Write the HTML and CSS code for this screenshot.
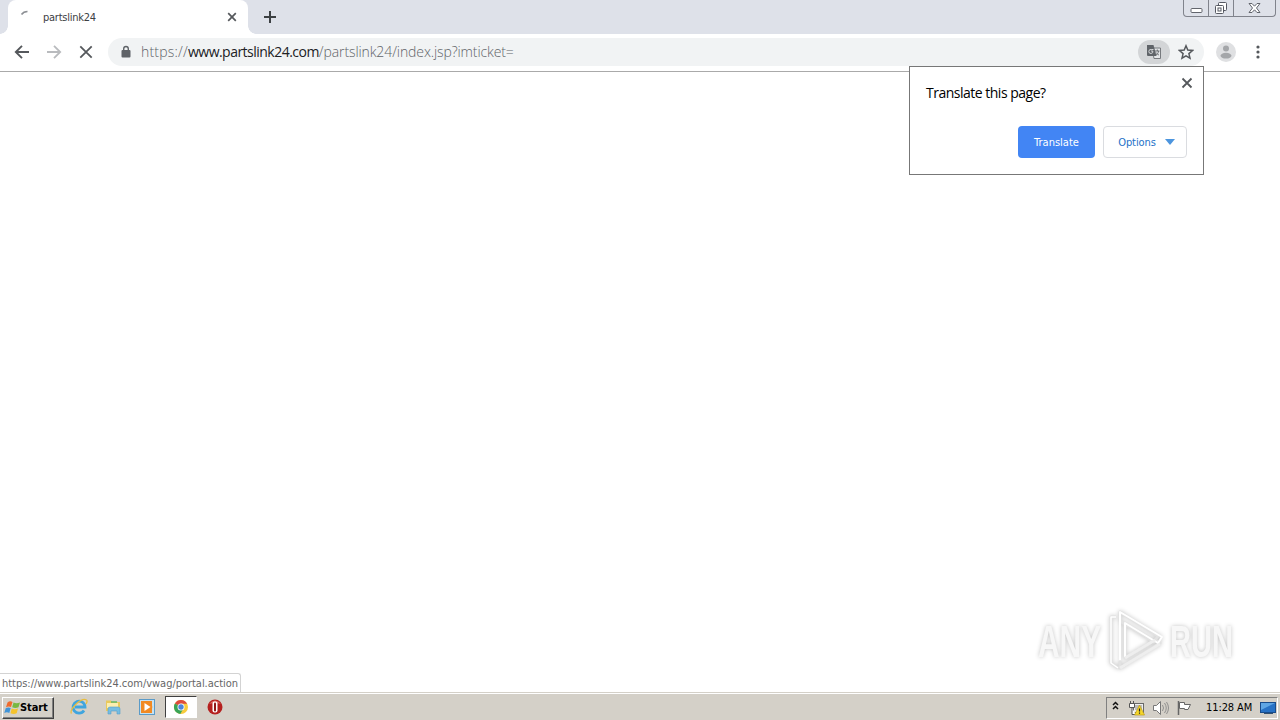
FILE: index.html
```html
<!DOCTYPE html>
<html lang="en">
<head>
  <meta charset="UTF-8" />
  <title>partslink24</title>
  <link rel="stylesheet" href="styles.css">
</head>
<body>
  <div class="tabstrip">
    <div class="tab">
      <svg class="spinner" width="16" height="16" viewBox="0 0 16 16"><path d="M2.500 5.500Q4.500 2.500 8.500 2.500" fill="none" stroke="#8d9095" stroke-width="1.600"/></svg>
      <span class="tab-title">partslink24</span>
      <svg width="10" height="10" viewBox="0 0 10 10"><path d="M1.200 1.200l7.600 7.600M8.800 1.200L1.200 8.800" stroke="#55585c" stroke-width="1.700"/></svg>
    </div>
    <svg class="new-tab" width="12" height="12" viewBox="0 0 12 12"><path d="M6 0v12M0 6h12" stroke="#3c4043" stroke-width="2"/></svg>
    <div class="window-buttons">
      <span class="win-min"><svg width="13" height="16" viewBox="0 0 13 16"><rect x="1" y="8.500" width="11" height="4" rx="1" fill="#fff" stroke="#62656d"/></svg></span>
      <span class="win-max"><svg width="14" height="14" viewBox="0 0 14 14" fill="#fff" stroke="#555862"><rect x="4.500" y="1.500" width="8" height="8" rx="1"/><rect x="1.500" y="4.500" width="8" height="8" rx="1"/><rect x="4" y="7" width="3" height="3"/></svg></span>
      <span class="win-close"><svg width="13" height="14" viewBox="0 0 13 14"><path d="M1 2.500h3l2.500 2.700L9 2.500h3L8.500 7l3.500 4.500H9L6.500 8.800 4 11.500H1L4.500 7z" fill="#fff" stroke="#62656d"/></svg></span>
    </div>
  </div>

  <div class="toolbar">
    <svg width="16" height="16" viewBox="0 0 16 16"><path d="M15 8H2M8 1.800L1.800 8 8 14.200" fill="none" stroke="#55585c" stroke-width="1.900"/></svg>
    <svg width="16" height="16" viewBox="0 0 16 16"><path d="M1 8h13M8 1.800L14.200 8 8 14.200" fill="none" stroke="#b9bbbe" stroke-width="1.800"/></svg>
    <svg width="16" height="16" viewBox="0 0 16 16"><path d="M2.300 2.300l11.400 11.400M13.700 2.300L2.300 13.700" stroke="#55585c" stroke-width="1.800"/></svg>
    <div class="omnibox">
      <svg width="10" height="14" viewBox="0 0 10 14"><path d="M2.700 6V3.800a2.300 2.300 0 0 1 4.600 0V6" fill="none" stroke="#5f6368" stroke-width="1.400"/><rect x=".5" y="5" width="9" height="7.500" rx="1" fill="#5f6368"/></svg>
      <div class="url"><span class="scheme">https://</span><span class="host">www.partslink24.com</span><span class="path">/partslink24/index.jsp?imticket=</span></div>
      <span class="translate-icon">
        <svg width="16" height="16" viewBox="0 0 16 16"><path d="M6 4h8.500v10.500H8z" fill="#e4e6e8" stroke="#777a7e"/><path d="M1 1h6.500l3 11H2a1 1 0 0 1-1-1z" fill="#5f6368"/><path d="M7.500 5.500H5.200A2 2 0 1 0 6.800 7H5" fill="none" stroke="#d5d7d9"/><path d="M9 7h4.500M11.300 5.500V7m1.200 0c0 2-1.500 3.500-2.500 4M10 8.500c1 1.500 2 2 3 2.500" fill="none" stroke="#696c70"/></svg>
      </span>
      <svg class="star" width="16" height="16" viewBox="0 0 16 16"><path d="M8 1.800l1.800 4.300 4.700.4-3.600 3.100 1.100 4.600L8 11.800l-4 2.400 1.100-4.600-3.600-3.100 4.700-.4z" fill="none" stroke="#55585c" stroke-width="1.500"/></svg>
    </div>
    <svg class="avatar" width="20" height="20" viewBox="0 0 20 20"><circle cx="10" cy="10" r="10" fill="#dfe0e2"/><circle cx="10" cy="6.500" r="3" fill="#a4a6a9"/><ellipse cx="10" cy="13.700" rx="5.500" ry="2.900" fill="#a4a6a9"/></svg>
    <svg class="menu" width="4" height="16" viewBox="0 0 4 16" fill="#55585c"><circle cx="2" cy="3" r="1.600"/><circle cx="2" cy="8" r="1.600"/><circle cx="2" cy="13" r="1.600"/></svg>
  </div>

  <div class="page">
    <div class="status">https://www.partslink24.com/vwag/portal.action</div>
    <div class="watermark">
      <span class="word any">ANY</span>
      <svg class="play" width="60" height="64" viewBox="0 0 60 64"><g fill="none" stroke-linejoin="round"><path d="M10 9H5v46l7 5M14 4v9l34 21 4-6zM19 17v33l30-18 5 3-40 25v-7" stroke="#e2e2e2" stroke-width="3"/><path d="M14 52V4l42 25-4 6-33-20v34" stroke="#fff" stroke-width="2"/><path d="M10 9H5v46l7 5" stroke="#fff" stroke-width="1.500"/><path d="M14 60l40-24M19 50l30-18" stroke="#eee" stroke-width="3"/></g></svg>
      <span class="word run">RUN</span>
    </div>
  </div>

  <div class="bubble">
    <div class="bubble-head">
      <span>Translate this page?</span>
      <svg width="12" height="12" viewBox="0 0 12 12"><path d="M1.500 1.500l9 9M10.500 1.500l-9 9" stroke="#55585c" stroke-width="1.800"/></svg>
    </div>
    <div class="bubble-actions">
      <button class="primary">Translate</button>
      <button class="options">Options <i class="caret"></i></button>
    </div>
  </div>

  <div class="taskbar">
    <div class="start">
      <svg width="17" height="16" viewBox="0 0 17 16"><path d="M3.500 2.500Q6 .5 8.500 2L7 7Q4.500 5.800 2 7.300z" fill="#ef6b2e"/><path d="M9.500 2.500q3 1.500 6.500 0L14.500 7.300q-3 1.500-6.300 0z" fill="#78b843"/><path d="M1.700 8.300Q4 6.800 6.700 8L5.300 13Q3 11.500.3 13z" fill="#4094d8"/><path d="M7.700 8.500q3 1.500 6.300 0L12.700 13.300q-3 1.500-6.200 0z" fill="#f5c32d"/></svg>
      <span>Start</span>
    </div>
    <div class="quick">
      <span class="task"><svg width="18" height="18" viewBox="0 0 18 18"><path d="M14 12.500A6 6 0 1 1 15 9H5" fill="none" stroke="#3fa5de" stroke-width="2.800"/><path d="M1.500 15.500C-1 12 11-1 16.500 2c1 .6.500 2.500-.5 4" fill="none" stroke="#e8bd3f" stroke-width="1.300"/></svg></span>
      <span class="task"><svg width="18" height="18" viewBox="0 0 18 18"><path d="M2 2.500h5L8 4h8v9H2z" fill="#e9c95c"/><path d="M3 5h11v5H3z" fill="#fbeeb0"/><path d="M7 4h6" stroke="#62b867" stroke-width="1.500"/><path d="M4 16v-5q0-2 2-2h8q2 0 2 2v5h-3v-3H7v3z" fill="#75bde2" stroke="#55a0cb" stroke-width=".6"/></svg></span>
      <span class="task"><svg width="18" height="18" viewBox="0 0 18 18"><rect x="1.500" y="1.500" width="15" height="15" fill="#c6e2f3" stroke="#5b9bc8"/><rect x="3" y="3" width="11" height="12" fill="#f08a24"/><circle cx="9" cy="9" r="5.300" fill="#f28a22"/><path d="M6.500 5l6 4-6 4z" fill="#fff"/></svg></span>
      <span class="task active"><svg width="16" height="16" viewBox="0 0 16 16"><circle cx="8" cy="8" r="7" fill="#f7cb3d"/><path d="M8 8L1.900 4.500A7 7 0 0 1 14.100 4.800H8z" fill="#dd4b3e"/><path d="M1.900 4.500A7 7 0 0 0 7.300 15L10.500 9.500 8 8z" fill="#39a457"/><circle cx="8" cy="8" r="3.500" fill="#fff"/><circle cx="8" cy="8" r="2.700" fill="#4c85dc"/></svg></span>
      <span class="task"><svg width="16" height="16" viewBox="0 0 16 16"><circle cx="8" cy="8" r="7.500" fill="#b5201f"/><path d="M2 5Q8-2 14 5 8 3 2 5z" fill="#dd6762"/><rect x="5.500" y="2.500" width="5" height="11" rx="2" fill="#fff"/><rect x="7" y="3.500" width="2" height="9" rx="1" fill="#8f1717"/></svg></span>
    </div>
    <div class="tray">
      <svg class="chevrons" width="7" height="10" viewBox="0 0 7 10"><path d="M1 4l2.500-2.500L6 4M1 8l2.500-2.500L6 8" fill="none" stroke="#111" stroke-width="1.500"/></svg>
      <svg class="network" width="17" height="16" viewBox="0 0 17 16"><rect x="5.500" y="3.500" width="10" height="9" fill="#eee" stroke="#686868"/><path d="M7 5h7v5H7z" fill="#bbb"/><path d="M1.500 3.500h5v4h-5zM2.500 1v2.500m3-2.500v2.500M4 8v6.500h4" fill="#fff" stroke="#555"/><path d="M11.500 5l5 10h-10z" fill="#f5d62a" stroke="#bb9b18" stroke-width=".7"/><path d="M11.500 8.500v3m0 1v1.300" stroke="#222" stroke-width="1.200"/></svg>
      <svg class="sound" width="17" height="16" viewBox="0 0 17 16"><path d="M1.500 5.500h3l4-4v13l-4-4h-3z" fill="#fff" stroke="#777"/><path d="M10.500 5q2 3 0 6M12.500 3q3.500 5 0 10M14.500 2q4 6 0 12" fill="none" stroke="#888" stroke-width=".9"/></svg>
      <svg class="flag" width="16" height="16" viewBox="0 0 16 16"><path d="M2.500 1v14" stroke="#666" stroke-width="1.500"/><path d="M3.500 2.500h5v2h6l-2.500 5H8.500v-1h-5z" fill="#fff" stroke="#666"/></svg>
      <span class="clock">11:28 AM</span>
      <svg class="desktop" width="16" height="14" viewBox="0 0 16 14"><rect x=".5" y="1.500" width="15" height="10" fill="#2872c5" stroke="#194c8b"/><path d="M1 2h14L1 9z" fill="#5fa6e4"/><path d="M4 12.500h9" stroke="#34516f"/></svg>
    </div>
  </div>
</body>
</html>
```
FILE: styles.css
```css
* {
  box-sizing: border-box;
}

body {
  margin: 0;
  height: 720px;
  display: flex;
  flex-direction: column;
  overflow: hidden;
  position: relative;
  background: #fff;
  font-family: "DejaVu Sans Condensed", "DejaVu Sans", sans-serif;
  font-size: 11px;
}

svg {
  display: block;
  flex: none;
}

.tabstrip {
  height: 34px;
  display: flex;
  background: #dee1e9;
  padding-left: 8px;
}

.tab {
  position: relative;
  width: 240px;
  height: 34px;
  display: flex;
  align-items: center;
  padding: 0 11px;
  background: #fff;
  border-radius: 8px 8px 0 0;
  color: #3c4043;
}

/* curved feet of the tab */
.tab::before,
.tab::after {
  content: "";
  position: absolute;
  bottom: 0;
  width: 8px;
  height: 8px;
}

.tab::before {
  left: -8px;
  background: radial-gradient(circle at 0 0, #dee1e9 7.5px, #fff 8px);
}

.tab::after {
  right: -8px;
  background: radial-gradient(circle at 100% 0, #dee1e9 7.5px, #fff 8px);
}

.spinner {
  margin: -1px 8px 0 0;
}

.tab-title {
  flex: 1;
  letter-spacing: -0.25px;
}

.new-tab {
  margin: 11px 0 0 16px;
}

.window-buttons {
  display: flex;
  width: 93px;
  height: 17px;
  margin: 0 4px 0 auto;
  border: 1px solid #80838c;
  border-top: 0;
  border-radius: 0 0 4px 4px;
}

.window-buttons span {
  display: flex;
  align-items: center;
  justify-content: center;
}

.win-min,
.win-max {
  width: 25px;
  border-right: 1px solid #80838c;
}

.win-close {
  flex: 1;
}

.toolbar {
  height: 38px;
  display: flex;
  align-items: center;
  gap: 16px;
  padding: 0 19px 2px 14px;
  border-bottom: 1px solid #aaa;
}

.omnibox {
  width: 1096px;
  height: 28px;
  margin-left: -2px;
  display: flex;
  align-items: center;
  padding: 0 10px 0 13px;
  background: #f1f3f4;
  border-radius: 14px;
}

.url {
  flex: 1;
  margin-left: 10px;
  white-space: nowrap;
  font: 300 14px "Open Sans", sans-serif;
  color: #5f6368;
}

.scheme {
  letter-spacing: 0.2px;
}

.host {
  color: #202124;
  font-weight: 400;
  letter-spacing: -0.52px;
}

.path {
  letter-spacing: -0.1px;
}

.translate-icon {
  width: 32px;
  height: 24px;
  display: flex;
  align-items: center;
  justify-content: center;
  background: #d3d5d7;
  border-radius: 12px;
}

.star {
  margin-left: 8px;
}

.avatar {
  margin-left: -4px;
}

.menu {
  margin-left: 4px;
}

.page {
  flex: 1;
  position: relative;
}

.status {
  position: absolute;
  left: 0;
  bottom: 0;
  width: 241px;
  height: 19px;
  padding-left: 2px;
  line-height: 19px;
  border: 1px solid #d3d3d3;
  border-width: 1px 1px 0 0;
  border-radius: 0 3px 0 0;
  color: #666;
  letter-spacing: -0.03px;
  white-space: nowrap;
}

.watermark {
  position: absolute;
  right: 46px;
  bottom: 20px;
  display: flex;
  align-items: center;
  filter: drop-shadow(0 0 2px #c4c4c4);
}

.word {
  font: bold 44px/64px "Liberation Sans", sans-serif;
  color: #f7f7f7;
}

.any {
  width: 66px;
  transform: translateY(2px) scaleX(0.68);
  transform-origin: 0 50%;
}

.run {
  width: 64px;
  margin-left: 4px;
  transform: translateY(2px) scaleX(0.66);
  transform-origin: 0 50%;
}

.play {
  margin-left: 2px;
}

.bubble {
  position: absolute;
  left: 909px;
  top: 66px;
  width: 295px;
  height: 109px;
  padding: 10px 16px 16px;
  border: 1px solid #777;
  background: #fff;
}

.bubble-head {
  display: flex;
  justify-content: space-between;
  margin-right: -6px;
  font: 14px/32px "Open Sans", sans-serif;
  letter-spacing: -0.5px;
}

.bubble-head svg {
  margin: 0;
}

.bubble-actions {
  display: flex;
  justify-content: flex-end;
  gap: 8px;
  margin-top: 17px;
}

button {
  height: 32px;
  padding: 0;
  border-radius: 4px;
  font: 11px "DejaVu Sans Condensed", sans-serif;
}

.primary {
  width: 77px;
  border: 0;
  background: #4285f4;
  color: #fff;
}

.options {
  width: 84px;
  display: flex;
  align-items: center;
  justify-content: center;
  gap: 9px;
  padding-left: 3px;
  border: 1px solid #dadce0;
  background: #fff;
  color: #2472c8;
  letter-spacing: -0.1px;
}

.caret {
  border: 5px solid transparent;
  border-top: 6px solid #4c95de;
  border-bottom: 0;
}

.taskbar {
  height: 28px;
  display: flex;
  align-items: center;
  padding: 2px 2px 0;
  background: #d4d0c8;
  border-top: 1px solid #d4d0c8;
  box-shadow: inset 0 1px #fff;
}

.start {
  width: 52px;
  height: 22px;
  display: flex;
  align-items: center;
  padding-left: 1px;
  border: 1px solid;
  border-color: #fff #404040 #404040 #fff;
  box-shadow: inset -1px -1px #808080;
  font-weight: bold;
  letter-spacing: -0.1px;
}

.start span {
  margin-left: -1px;
}

.quick {
  display: flex;
  align-items: center;
  margin: -1px 0 0 8px;
}

.task {
  width: 34px;
  height: 22px;
  display: flex;
  align-items: center;
  justify-content: center;
}

.active {
  width: 32px;
  margin: 0 1px;
  background: #fff;
  border: 1px solid;
  border-color: #404040 #fff #fff #404040;
}

.tray {
  width: 172px;
  height: 22px;
  margin-left: auto;
  display: flex;
  align-items: center;
  padding-left: 5px;
  border: 1px solid;
  border-color: #808080 #fff #fff #808080;
}

.chevrons {
  margin-top: -3px;
}

.network {
  margin-left: 9px;
}

.sound {
  margin-left: 7px;
}

.flag {
  margin-left: 7px;
}

.clock {
  width: 47px;
  margin-left: 14px;
  white-space: nowrap;
  letter-spacing: -0.1px;
}

.desktop {
  margin-left: 7px;
}
```
